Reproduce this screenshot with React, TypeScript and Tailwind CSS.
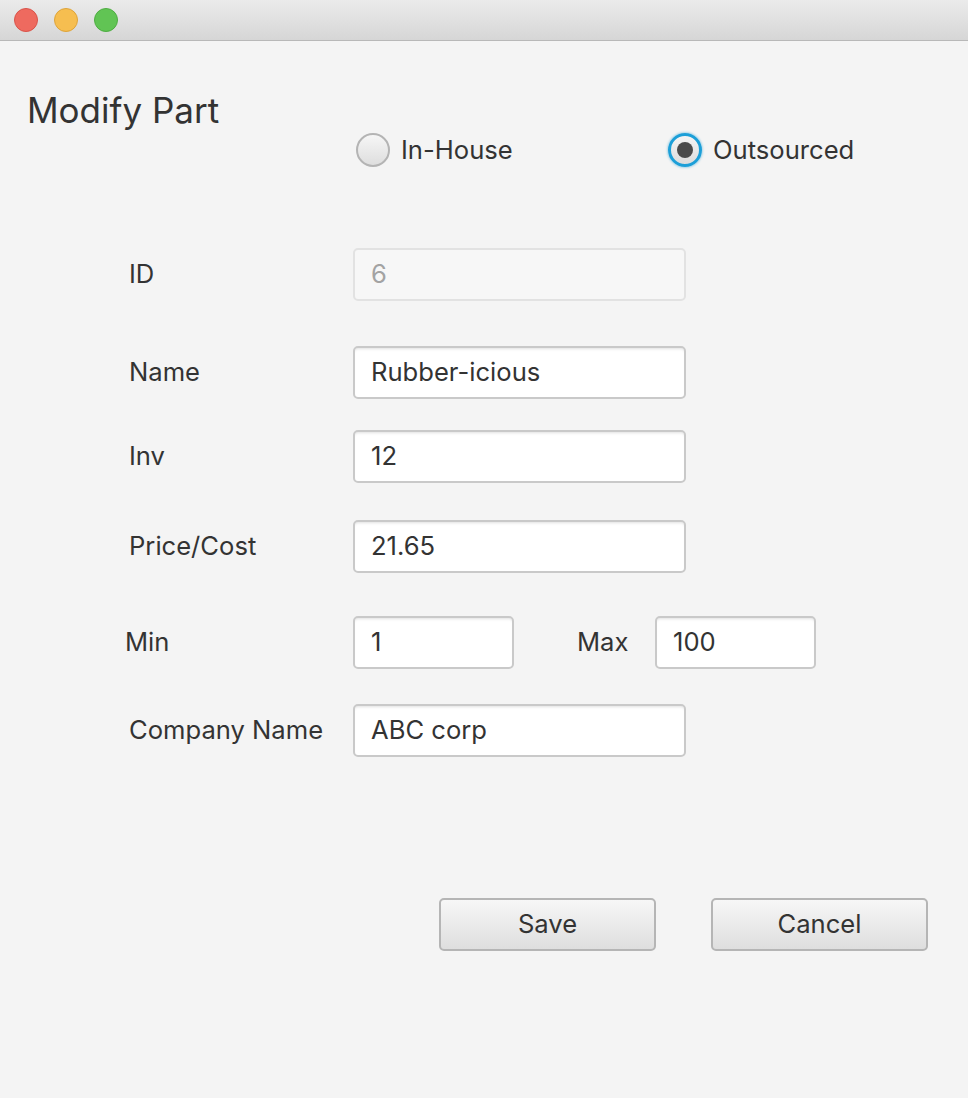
import React, { useState } from "react";

const font = { fontFamily: "Inter, 'Noto Sans', sans-serif" };

function TrafficLights() {
  return (
    <div className="h-[41px] flex items-center gap-[16px] pl-[14px] bg-gradient-to-b from-[#ebebeb] to-[#d6d6d6] border-b border-[#b8b8b8]">
      <span className="w-[24px] h-[24px] rounded-full bg-[#ee6a5f] border border-[#d9534a]" />
      <span className="w-[24px] h-[24px] rounded-full bg-[#f6be50] border border-[#dea43a]" />
      <span className="w-[24px] h-[24px] rounded-full bg-[#61c454] border border-[#4ead42]" />
    </div>
  );
}

function Radio({ label, checked, onClick }: { label: string; checked: boolean; onClick: () => void }) {
  return (
    <button onClick={onClick} className="flex items-center gap-[11px] text-[25.6px] leading-[34px] text-[#333]">
      {checked ? (
        <span className="w-[34px] h-[34px] rounded-full border-[3px] border-[#1c9fd8] bg-gradient-to-b from-[#f4f4f4] to-[#dcdcdc] flex items-center justify-center shadow-[0_0_2px_1px_rgba(28,159,216,0.35)]">
          <span className="w-[16px] h-[16px] rounded-full bg-[#4a4a4a]" />
        </span>
      ) : (
        <span className="w-[34px] h-[34px] rounded-full border-2 border-[#b4b4b4] bg-gradient-to-b from-[#f6f6f6] to-[#dedede]" />
      )}
      {label}
    </button>
  );
}

function Field({ value, disabled, width = "w-[333px]" }: { value: string; disabled?: boolean; width?: string }) {
  return (
    <div
      className={
        disabled
          ? `${width} h-[53px] rounded-[5px] border-2 border-[#e2e2e2] bg-[#f7f7f7] flex items-center pl-[16px] text-[25.6px] text-[#a3a3a3]`
          : `${width} h-[53px] rounded-[5px] border-2 border-[#c9c9c9] bg-white shadow-[inset_0_3px_3px_-2px_rgba(0,0,0,0.12)] flex items-center pl-[16px] text-[25.6px] text-[#333]`
      }
    >
      {value}
    </div>
  );
}

function Row({ label, value, disabled, mt }: { label: string; value: string; disabled?: boolean; mt: string }) {
  return (
    <div className={`flex items-center ${mt}`}>
      <div className="w-[353px] pl-[129px] text-[25.6px] text-[#333]">{label}</div>
      <Field value={value} disabled={disabled} />
    </div>
  );
}

export default function App() {
  const [source, setSource] = useState("out");

  return (
    <div className="w-[968px] h-[1098px] bg-[#f4f4f4] overflow-hidden" style={font}>
      <TrafficLights />

      <div className="flex items-start pt-[49px]">
        <div className="w-[356px] pl-[27px] text-[35px] leading-[40px] text-[#333]">Modify Part</div>
        <div className="flex items-center mt-[43px]">
          <div className="w-[312px]">
            <Radio label="In-House" checked={source === "in"} onClick={() => setSource("in")} />
          </div>
          <Radio label="Outsourced" checked={source === "out"} onClick={() => setSource("out")} />
        </div>
      </div>

      <Row label="ID" value="6" disabled mt="mt-[81px]" />
      <Row label="Name" value="Rubber-icious" mt="mt-[45px]" />
      <Row label="Inv" value="12" mt="mt-[31px]" />
      <Row label="Price/Cost" value="21.65" mt="mt-[37px]" />

      <div className="flex items-center mt-[43px]">
        <div className="w-[353px] pl-[125px] text-[25.6px] text-[#333]">Min</div>
        <Field value="1" width="w-[161px]" />
        <div className="w-[141px] pl-[63px] text-[25.6px] text-[#333]">Max</div>
        <Field value="100" width="w-[161px]" />
      </div>

      <Row label="Company Name" value="ABC corp" mt="mt-[35px]" />

      <div className="flex mt-[141px] pl-[439px] gap-[55px]">
        <button className="w-[217px] h-[53px] rounded-[5px] border-2 border-[#b5b5b5] bg-gradient-to-b from-[#f7f7f7] to-[#dedede] text-[25.6px] text-[#333]">
          Save
        </button>
        <button className="w-[217px] h-[53px] rounded-[5px] border-2 border-[#b5b5b5] bg-gradient-to-b from-[#f7f7f7] to-[#dedede] text-[25.6px] text-[#333]">
          Cancel
        </button>
      </div>
    </div>
  );
}
